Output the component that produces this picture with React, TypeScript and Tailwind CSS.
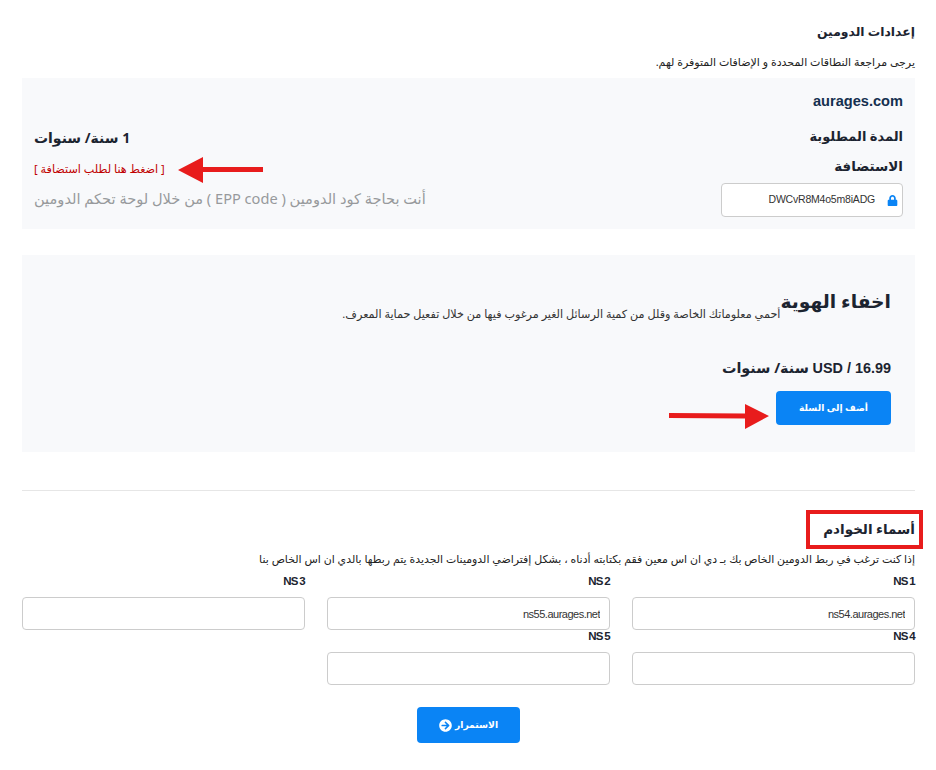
import React from 'react';
import { FaLock, FaArrowCircleRight } from 'react-icons/fa';

const arabic = "font-['Noto_Sans','DejaVu_Sans',sans-serif]";

function NsField({ label, value }: { label: string; value?: string }) {
  return (
    <div className="flex flex-col">
      <label dir="ltr" className="h-[15px] text-right text-[11.5px] leading-[13px] font-bold tracking-[-0.7px] [word-spacing:-1px] text-[#1c2430] font-['Liberation_Sans',sans-serif]">
        {label}
      </label>
      <input
        readOnly
        dir="ltr"
        value={value ?? ''}
        className="mt-[7px] h-[33px] w-full rounded border border-[#ccc] bg-white px-[9px] text-right text-[11px] tracking-[-0.5px] text-[#333] outline-none font-['Liberation_Sans',sans-serif]"
      />
    </div>
  );
}

export default function App() {
  return (
    <div dir="rtl" className={`relative h-[770px] w-[936px] overflow-hidden bg-white pr-[21px] pl-[22px] text-[#1c2430] ${arabic}`}>
      <h2 className="h-[62px] pt-[22px] text-[12.4px] leading-5 font-bold">إعدادات الدومين</h2>
      <p className="-mt-[8px] h-[24px] text-[11px] leading-4 text-[#222]">يرجى مراجعة النطاقات المحددة و الإضافات المتوفرة لهم.</p>

      <section className="flex h-[151px] justify-between bg-[#f8f9fb] pt-[14px] pr-[12px] pb-[12px] pl-[12px]">
        <div className="flex w-[182px] flex-col">
          <div dir="ltr" className="h-[18px] text-right text-[14.6px] leading-[18px] font-bold text-[#14304f] font-['Liberation_Sans',sans-serif]">aurages.com</div>
          <div className="mt-[16px] h-[20px] text-[13px] leading-5 font-bold">المدة المطلوبة</div>
          <div className="mt-[10px] h-[20px] text-[13.5px] leading-5 font-bold">الاستضافة</div>
          <div className="mt-[7px] flex h-[34px] items-center gap-[12px] rounded border border-[#ccc] bg-white pr-[4px]">
            <FaLock className="text-[11px] text-[#0a84f5]" />
            <span dir="ltr" className="text-[10.5px] tracking-[-0.2px] text-[#333] font-['Liberation_Sans',sans-serif]">DWCvR8M4o5m8iADG</span>
          </div>
        </div>
        <div className="flex flex-col items-end pt-[36px]">
          <div className="text-[14px] leading-5 font-bold">1 سنة/ سنوات</div>
          <a className="mt-[13px] text-[11.2px] leading-4 text-[#c00000]">[ اضغط هنا لطلب استضافة ]</a>
          <p className="mt-[11px] text-[14.6px] leading-5 text-[#97999c]">أنت بحاجة كود الدومين ( EPP code ) من خلال لوحة تحكم الدومين</p>
        </div>
      </section>

      <section className="mt-[26px] h-[197px] bg-[#f8f9fb] pt-[32px] pr-[24px]">
        <div className="flex items-end">
          <h3 className="text-[18.7px] leading-7 font-bold text-[#1c2430]">اخفاء الهوية</h3>
          <p className="-mb-[7px] text-[11.2px] leading-4 text-[#333]">أحمي معلوماتك الخاصة وقلل من كمية الرسائل الغير مرغوب فيها من خلال تفعيل حماية المعرف.</p>
        </div>
        <div className="mt-[43px] text-[14.4px] leading-5 font-bold">
          <span dir="ltr" className="font-['Liberation_Sans',sans-serif]">USD / 16.99</span> سنة/ سنوات
        </div>
        <button className="mt-[13px] block h-[34px] w-[115px] rounded-sm bg-[#0a84f5] text-[9.2px] font-bold text-white">أضف إلى السلة</button>
      </section>

      <hr className="mt-[38px] border-[#e6e6e6]" />

      <div className="mt-[28px] w-fit text-[13.5px] leading-5 font-bold">أسماء الخوادم</div>
      <p className="mt-[12px] h-[16px] text-[10.95px] leading-4 text-[#222]">إذا كنت ترغب في ربط الدومين الخاص بك بـ دي ان اس معين فقم بكتابته أدناه ، بشكل إفتراضي الدومينات الجديدة يتم ربطها بالدي ان اس الخاص بنا</p>

      <div className="mt-[8px] grid grid-cols-3 gap-x-[22px]">
        <NsField label="NS 1" value="ns54.aurages.net" />
        <NsField label="NS 2" value="ns55.aurages.net" />
        <NsField label="NS 3" />
        <NsField label="NS 4" />
        <NsField label="NS 5" />
      </div>

      <div className="mt-[22px] flex justify-center">
        <button className="flex h-[36px] w-[103px] items-center justify-center gap-[3px] rounded bg-[#0a84f5] text-[9.2px] font-bold text-white">
          الاستمرار
          <FaArrowCircleRight className="text-[13px]" />
        </button>
      </div>

      {/* annotations drawn over the page */}
      <svg className="absolute top-[157px] left-[178px]" width="86" height="26" viewBox="0 0 86 26">
        <path d="M0 13 L25 0 V10 H85 V15 H25 V26 Z" fill="#e81c1c" />
      </svg>
      <svg className="absolute top-[404px] left-[668px]" width="102" height="26" viewBox="0 0 102 26">
        <path d="M1 9 L77 9.5 V0 L101 12 L77 25 V14.5 L1 14 Z" fill="#e81c1c" />
      </svg>
      <div className="absolute top-[510px] left-[806px] h-[39px] w-[117px] border-4 border-[#e81c1c]" />
    </div>
  );
}
